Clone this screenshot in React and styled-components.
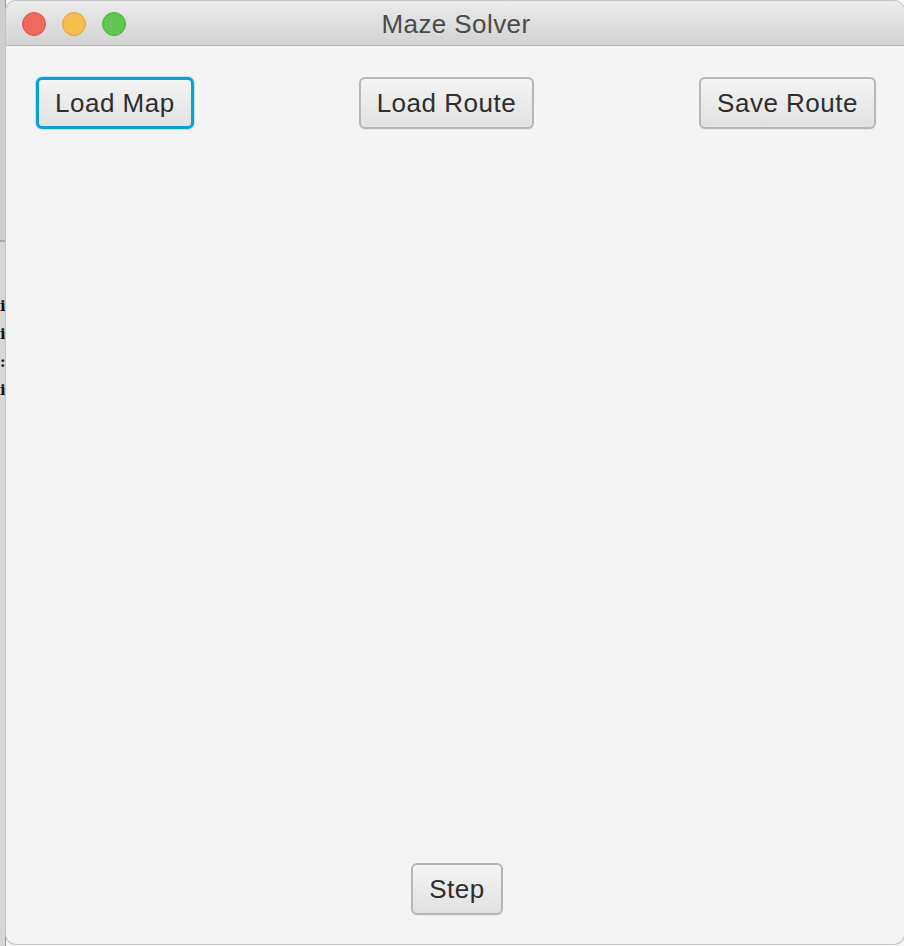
import React from "react";
import styled, { createGlobalStyle } from "styled-components";

const GlobalStyle = createGlobalStyle`
  html, body {
    margin: 0;
    padding: 0;
    background: #ececec;
    font-family: "Liberation Sans", Arial, sans-serif;
  }
  #root {
    width: 904px;
    height: 946px;
    overflow: hidden;
  }
`;

const Desktop = styled.div`
  display: flex;
  width: 904px;
  height: 946px;
  background: #f6f6f6;
`;

const BehindStrip = styled.div`
  width: 6px;
  flex-shrink: 0;
  display: flex;
  flex-direction: column;
  background: #d6d6d6;
  border-right: 1px solid #9a9a9a;
  box-sizing: border-box;
  overflow: hidden;
`;

const StripTop = styled.div`
  height: 240px;
  background: #cfcfcf;
  border-bottom: 2px solid #a9a9a9;
`;

const StripText = styled.div`
  padding-top: 50px;
  font-family: "DejaVu Serif", serif;
  font-size: 15px;
  line-height: 28px;
  font-weight: bold;
  color: #111;
`;

const Window = styled.div`
  margin-top: 1px;
  width: 898px;
  height: 943px;
  display: flex;
  flex-direction: column;
  background: #f4f4f4;
  border-radius: 10px;
  overflow: hidden;
  box-shadow: 0 0 0 1px #c4c4c4;
`;

const TitleBar = styled.div`
  position: relative;
  height: 44px;
  flex-shrink: 0;
  display: flex;
  align-items: center;
  justify-content: center;
  background: linear-gradient(#ebebeb, #d3d3d3);
  border-bottom: 1px solid #b4b4b4;
`;

const Lights = styled.div`
  position: absolute;
  left: 16px;
  top: 11px;
  display: flex;
  gap: 16px;
`;

const Light = styled.span`
  width: 22px;
  height: 22px;
  border-radius: 50%;
  background: ${p => p.color};
  border: 1px solid ${p => p.edge};
`;

const Title = styled.div`
  font-size: 26px;
  letter-spacing: 0.4px;
  color: #4b4b4b;
  padding-top: 2px;
  padding-left: 2px;
`;

const Content = styled.div`
  flex: 1;
  display: flex;
  flex-direction: column;
  justify-content: space-between;
  padding: 31px 28px 29px 30px;
`;

const TopRow = styled.div`
  display: flex;
  justify-content: space-between;
  align-items: center;
`;

const BottomRow = styled.div`
  display: flex;
  justify-content: center;
  padding-left: 2px;
`;

const Button = styled.button`
  height: 52px;
  box-sizing: border-box;
  font-family: "Liberation Sans", Arial, sans-serif;
  font-size: 26px;
  letter-spacing: 0.5px;
  color: #2e2e2e;
  border-radius: 6px;
  border: ${p => (p.focused ? "3px solid #0a9fd8" : "2px solid #b6b6b6")};
  background: linear-gradient(#f4f4f4, #e1e1e1);
  box-shadow: ${p =>
    p.focused ? "0 0 0 1px #bfe3f3" : "0 1px 0 rgba(0,0,0,0.05)"};
  padding: 0 16px;
`;

export default function App() {
  return (
    <>
      <GlobalStyle />
      <Desktop>
        <BehindStrip>
          <StripTop />
          <StripText>
            i<br />i<br />:<br />i
          </StripText>
        </BehindStrip>
        <Window>
          <TitleBar>
            <Lights>
              <Light color="#ee6a5e" edge="#d8564b" />
              <Light color="#f6be4f" edge="#dea43a" />
              <Light color="#62c554" edge="#4faf42" />
            </Lights>
            <Title>Maze Solver</Title>
          </TitleBar>
          <Content>
            <TopRow>
              <Button focused>Load Map</Button>
              <Button>Load Route</Button>
              <Button>Save Route</Button>
            </TopRow>
            <BottomRow>
              <Button>Step</Button>
            </BottomRow>
          </Content>
        </Window>
      </Desktop>
    </>
  );
}
